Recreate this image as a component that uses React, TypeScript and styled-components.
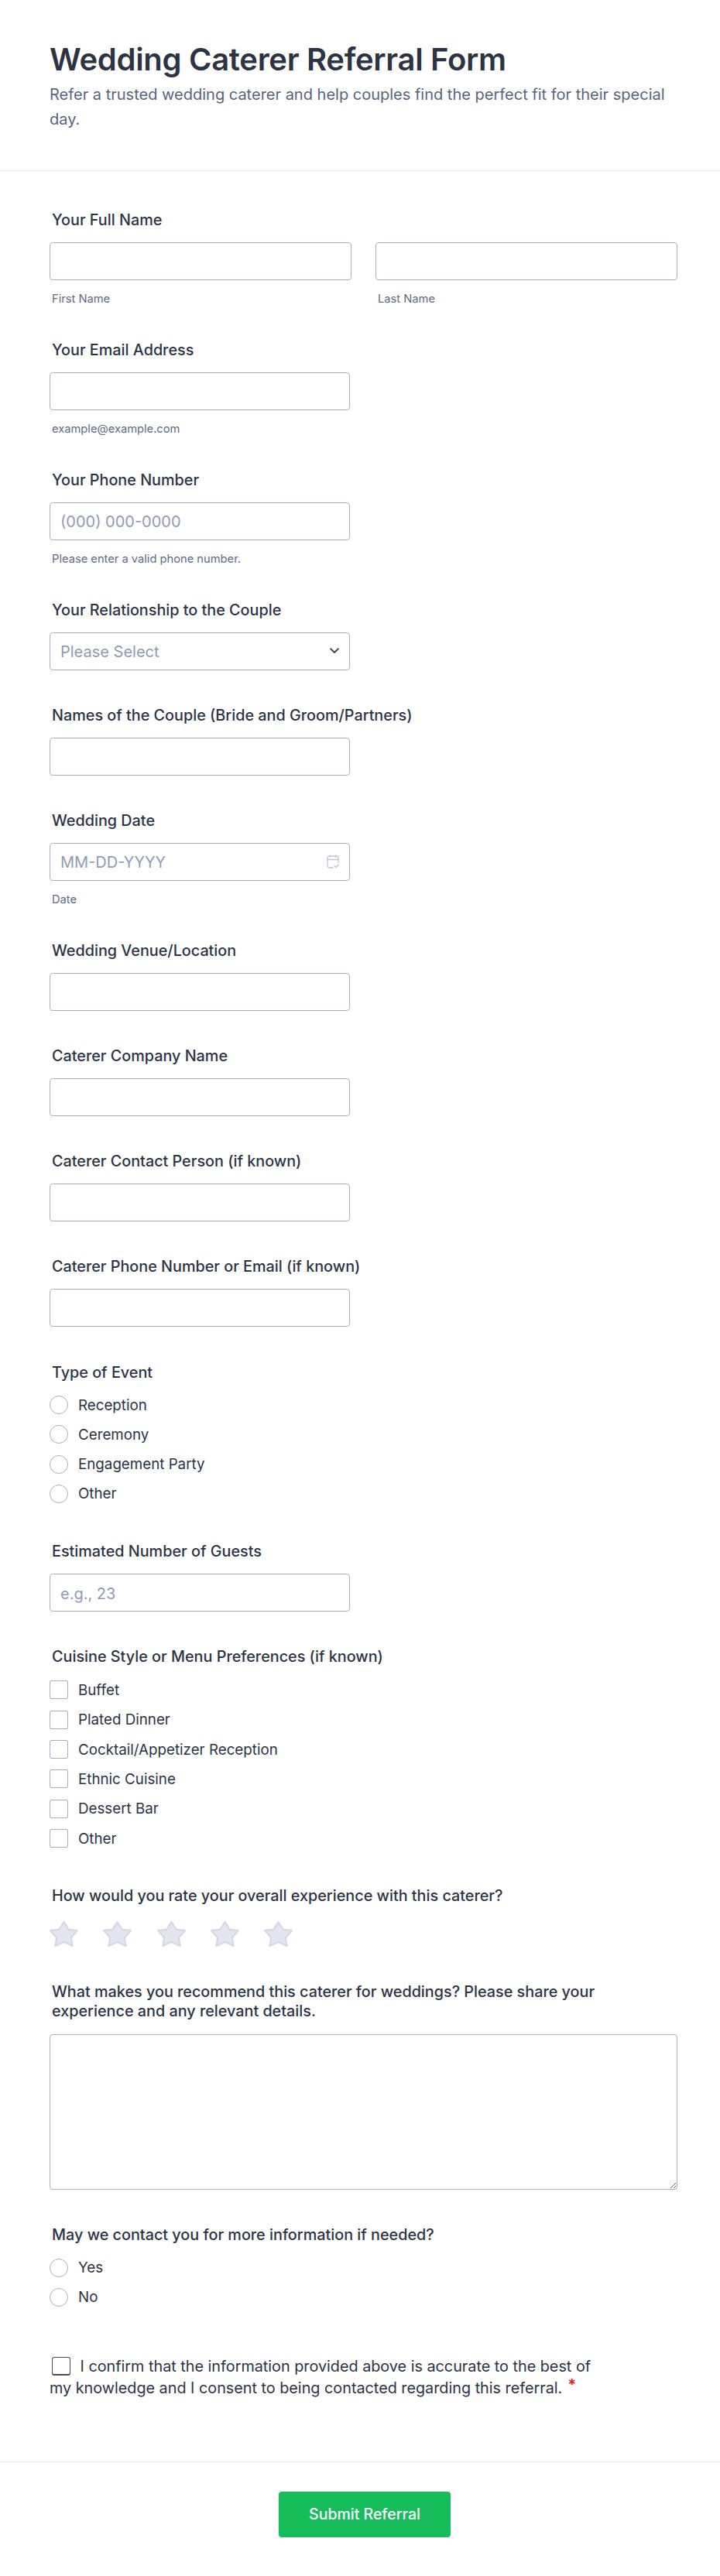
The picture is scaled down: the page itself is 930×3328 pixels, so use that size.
import styled, { createGlobalStyle } from "styled-components";

const GlobalStyle = createGlobalStyle`
  * {
    box-sizing: border-box;
  }

  body {
    margin: 0;
    background: #fff;
    font-family: "Inter", sans-serif;
    color: #2c3345;
  }
`;

const Page = styled.main`
  width: 930px;
  height: 3328px;
  background: #fff;
`;

const Header = styled.header`
  height: 221px;
  padding: 53px 64px 0;
  border-bottom: 1px solid #e3e5ec;
`;

const Title = styled.h1`
  margin: 0 0 5px;
  font-size: 40px;
  line-height: 48px;
  font-weight: 600;
  letter-spacing: -0.3px;
  color: #2c3345;
`;

const Description = styled.p`
  margin: 0;
  font-size: 20px;
  line-height: 32px;
  color: #57647e;
`;

const Form = styled.form`
  display: flex;
  flex-direction: column;
  padding: 50.5px 55px 0 64px;
`;

const Field = styled.div<{ $after?: number }>`
  display: flex;
  flex-direction: column;
  margin-bottom: ${(p) => p.$after ?? 46}px;
`;

const Label = styled.label<{ $gap?: number }>`
  display: block;
  max-width: 780px;
  padding-left: 3px;
  font-size: 19.8px;
  line-height: 25px;
  font-weight: 500;
  color: #2c3345;
  margin-bottom: ${(p) => p.$gap ?? 16.5}px;
`;

const Row = styled.div`
  display: grid;
  grid-template-columns: 390px 390px;
  gap: 31px;
`;

const Input = styled.input<{ $full?: boolean }>`
  display: block;
  width: ${(p) => (p.$full ? "100%" : "388px")};
  height: 48.5px;
  padding: 2px 13px 0;
  border: 1px solid #a9afc0;
  border-radius: 4px;
  background: #fff;
  font-family: inherit;
  font-size: 20px;
  color: #2c3345;

  &::placeholder {
    color: #8f9bb3;
    opacity: 1;
  }
`;

const SubLabel = styled.span`
  display: block;
  padding-left: 3px;
  margin-top: 16px;
  font-size: 14.7px;
  line-height: 16px;
  color: #606c85;
`;

const InputWrap = styled.div`
  position: relative;
  width: 388px;
`;

const TrailingIcon = styled.span<{ $right: number }>`
  position: absolute;
  top: 50%;
  right: ${(p) => p.$right}px;
  transform: translateY(-50%);
  display: flex;
`;

const Options = styled.div`
  display: flex;
  flex-direction: column;
  gap: 14.33px;
`;

const Option = styled.label`
  display: flex;
  align-items: center;
  gap: 13px;
  height: 24px;
  font-size: 18.75px;
  color: #2c3345;
`;

const Radio = styled.span`
  width: 24px;
  height: 24px;
  border: 1px solid #a9afc0;
  border-radius: 50%;
  background: #fff;
`;

const Check = styled.span`
  width: 24px;
  height: 24px;
  border: 1px solid #a9afc0;
  border-radius: 2px;
  background: #fff;
`;

const Stars = styled.div`
  display: flex;
  gap: 32.3px;
  height: 35px;
`;

const Textarea = styled.textarea`
  display: block;
  width: 811px;
  height: 201px;
  border: 1px solid #a9afc0;
  border-radius: 4px;
  background: #fff;
  resize: vertical;
`;

const Consent = styled.p`
  margin: 0 0 81px;
  max-width: 720px;
  font-size: 19.8px;
  line-height: 28px;
  color: #2c3345;
`;

const ConsentBox = styled.span`
  display: inline-block;
  width: 24px;
  height: 24px;
  margin: 0 12.5px 0 3px;
  border: 1px solid #4a4a5a;
  border-bottom-width: 2px;
  border-radius: 3px;
  vertical-align: -5px;
`;

const Required = styled.span`
  margin-left: 7px;
  font-weight: 700;
  line-height: 0;
  vertical-align: 4px;
  color: #f01f1f;
`;

const Footer = styled.footer`
  display: flex;
  justify-content: center;
  padding: 38px 0 0 12px;
  border-top: 1px solid #e3e5ec;
`;

const Submit = styled.button`
  width: 222px;
  height: 59px;
  border: 0;
  border-radius: 4px;
  background: #18bd5b;
  color: #fff;
  font-family: inherit;
  font-size: 19.5px;
  font-weight: 500;
`;

const Star = () => (
  <svg width="37" height="35" viewBox="0 0 37 35">
    <path
      d="M18.5 2 L24.8 11.8 L36 13 L27.8 22.5 L29.8 33 L18.5 28 L7.2 33 L9.2 22.5 L1 13 L12.2 11.8 Z"
      fill="#e3e6f0"
      stroke="#d5d8e4"
      strokeWidth="2"
      strokeLinejoin="round"
    />
  </svg>
);

const Chevron = () => (
  <svg width="12" height="8" viewBox="0 0 12 8" fill="none">
    <path d="M1.2 1.2 L6 6 L10.8 1.2" stroke="#434a60" strokeWidth="2" strokeLinecap="round" strokeLinejoin="round" />
  </svg>
);

const CalendarIcon = () => (
  <svg width="16" height="18" viewBox="0 0 16 18" fill="none" stroke="#c2c6d3" strokeWidth="1.3" strokeLinecap="round">
    <path d="M8 17 H3 a2 2 0 0 1 -2 -2 V4 a2 2 0 0 1 2 -2 H13 a2 2 0 0 1 2 2 V10.5" />
    <path d="M1 6.5 H15" />
    <path d="M4.5 0.8 V3.5 M11.5 0.8 V3.5" />
    <path d="M10 14.5 L12 16.5 L15.2 13.2" />
  </svg>
);

const App = () => {
  return (
    <Page>
      <GlobalStyle />
      <Header>
        <Title>Wedding Caterer Referral Form</Title>
        <Description>
          Refer a trusted wedding caterer and help couples find the perfect fit for their special day.
        </Description>
      </Header>

      <Form>
        <Field>
          <Label>Your Full Name</Label>
          <Row>
            <div>
              <Input $full />
              <SubLabel>First Name</SubLabel>
            </div>
            <div>
              <Input $full />
              <SubLabel>Last Name</SubLabel>
            </div>
          </Row>
        </Field>

        <Field>
          <Label>Your Email Address</Label>
          <Input />
          <SubLabel>example@example.com</SubLabel>
        </Field>

        <Field>
          <Label>Your Phone Number</Label>
          <Input placeholder="(000) 000-0000" />
          <SubLabel>Please enter a valid phone number.</SubLabel>
        </Field>

        <Field>
          <Label>Your Relationship to the Couple</Label>
          <InputWrap>
            <Input placeholder="Please Select" />
            <TrailingIcon $right={14}>
              <Chevron />
            </TrailingIcon>
          </InputWrap>
        </Field>

        <Field>
          <Label>Names of the Couple (Bride and Groom/Partners)</Label>
          <Input />
        </Field>

        <Field>
          <Label>Wedding Date</Label>
          <InputWrap>
            <Input placeholder="MM-DD-YYYY" />
            <TrailingIcon $right={14.5}>
              <CalendarIcon />
            </TrailingIcon>
          </InputWrap>
          <SubLabel>Date</SubLabel>
        </Field>

        <Field>
          <Label>Wedding Venue/Location</Label>
          <Input />
        </Field>

        <Field>
          <Label>Caterer Company Name</Label>
          <Input />
        </Field>

        <Field>
          <Label>Caterer Contact Person (if known)</Label>
          <Input />
        </Field>

        <Field $after={47}>
          <Label>Caterer Phone Number or Email (if known)</Label>
          <Input />
        </Field>

        <Field $after={50}>
          <Label $gap={17.5}>Type of Event</Label>
          <Options>
            {["Reception", "Ceremony", "Engagement Party", "Other"].map((item) => (
              <Option key={item}>
                <Radio />
                {item}
              </Option>
            ))}
          </Options>
        </Field>

        <Field>
          <Label>Estimated Number of Guests</Label>
          <Input placeholder="e.g., 23" />
        </Field>

        <Field $after={50}>
          <Label $gap={18.5}>Cuisine Style or Menu Preferences (if known)</Label>
          <Options>
            {["Buffet", "Plated Dinner", "Cocktail/Appetizer Reception", "Ethnic Cuisine", "Dessert Bar", "Other"].map(
              (item) => (
                <Option key={item}>
                  <Check />
                  {item}
                </Option>
              ),
            )}
          </Options>
        </Field>

        <Field $after={45.5}>
          <Label $gap={18.5}>How would you rate your overall experience with this caterer?</Label>
          <Stars>
            {[1, 2, 3, 4, 5].map((n) => (
              <Star key={n} />
            ))}
          </Stars>
        </Field>

        <Field>
          <Label>What makes you recommend this caterer for weddings? Please share your experience and any relevant details.</Label>
          <Textarea />
        </Field>

        <Field $after={62.7}>
          <Label $gap={18}>May we contact you for more information if needed?</Label>
          <Options>
            {["Yes", "No"].map((item) => (
              <Option key={item}>
                <Radio />
                {item}
              </Option>
            ))}
          </Options>
        </Field>

        <Consent>
          <ConsentBox />I confirm that the information provided above is accurate to the best of my knowledge and I
          consent to being contacted regarding this referral.<Required>*</Required>
        </Consent>
      </Form>

      <Footer>
        <Submit type="button">Submit Referral</Submit>
      </Footer>
    </Page>
  );
};

export default App;
